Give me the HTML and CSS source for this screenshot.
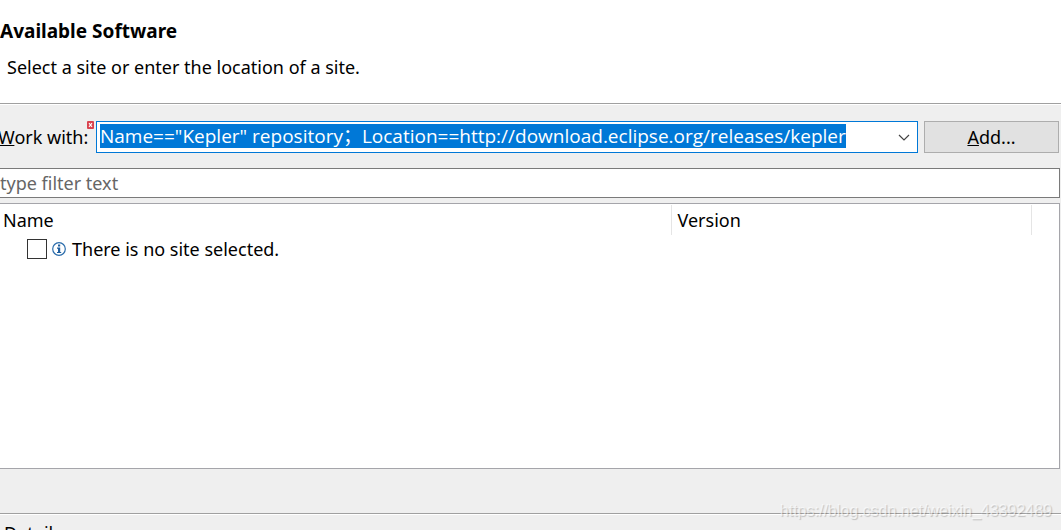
FILE: index.html
```html
<!DOCTYPE html>
<html lang="en">
<head>
<meta charset="UTF-8">
<meta name="viewport" content="width=device-width, initial-scale=1.0">
<title>Available Software</title>
<link rel="stylesheet" href="styles.css">
</head>
<body>
<header class="header">
  <h1>Available Software</h1>
  <p>Select a site or enter the location of a site.</p>
</header>

<main class="content">
  <div class="work-row">
    <label for="workWith" class="work-label"><u>W</u>ork with:</label>
    <svg class="error-icon" viewBox="0 0 7 8" aria-hidden="true">
      <rect width="7" height="8" rx="1" fill="#d9434f"/>
      <path d="M2 2.2L5 5.8M5 2.2L2 5.8" stroke="#fff" stroke-width="1.1"/>
    </svg>
    <div class="combo">
      <input type="text" id="workWith" class="combo-input" spellcheck="false" autocomplete="off" value="Name==&quot;Kepler&quot; repository；Location==http://download.eclipse.org/releases/kepler">
      <button type="button" class="combo-arrow" aria-label="Show sites">
        <svg viewBox="0 0 12 7" aria-hidden="true"><path d="M1 1L6 6L11 1" fill="none" stroke="#444" stroke-width="1.2"/></svg>
      </button>
    </div>
    <button type="button" class="add-button"><u>A</u>dd...</button>
  </div>

  <input type="text" class="filter" placeholder="type filter text" aria-label="Filter">

  <div class="table-panel">
    <table class="sites">
      <colgroup>
        <col>
        <col class="col-version">
        <col class="col-rest">
      </colgroup>
      <thead>
        <tr><th>Name</th><th>Version</th><td></td></tr>
      </thead>
      <tbody>
        <tr>
          <td colspan="3">
            <div class="site">
              <input type="checkbox" id="noSite" class="site-check">
              <svg class="info-icon" viewBox="0 0 14 14" aria-hidden="true">
                <circle cx="7" cy="7" r="6.3" fill="#fff" stroke="#2a6cab" stroke-width="1.2"/>
                <path d="M6 2.6h2.2v2H6zM5 5.6h3.2V10h1v1.1H5V10h1V6.7H5z" fill="#1f5f9f"/>
              </svg>
              <label for="noSite">There is no site selected.</label>
            </div>
          </td>
        </tr>
      </tbody>
    </table>
  </div>
</main>

<section class="details">
  <h2>Details</h2>
</section>

<div class="watermark">https://blog.csdn.net/weixin_43392489</div>

<script>
  const workWith = document.getElementById("workWith");
  workWith.focus();
  workWith.setSelectionRange(0, workWith.value.length, "backward");
</script>
</body>
</html>
```
FILE: styles.css
```css
* {
  box-sizing: border-box;
}

body {
  display: flex;
  flex-direction: column;
  height: 100vh;
  margin: 0;
  overflow: hidden;
  font-family: "Noto Sans", "Noto Sans CJK SC", sans-serif;
  font-size: 18px;
  line-height: 24px;
  color: #000;
  background-color: #efefef;
}

input,
button {
  font: inherit;
  color: inherit;
}

.header {
  height: 104px;
  padding-top: 19px;
  background-color: #fff;
  border-bottom: 1px solid #a0a0a0;
}

h1 {
  margin: 0;
  font-size: 19px;
  font-weight: bold;
}

.header p {
  margin: 12px 0 0 7px;
}

.content {
  flex: 1;
  display: flex;
  flex-direction: column;
  min-height: 0;
  padding: 16px 1px 0 0;
  border-top: 1px solid #fff;
}

.work-row {
  display: flex;
  align-items: center;
  height: 32px;
  margin-right: 1px;
}

.work-label {
  width: 87px;
  margin-left: -2px;
  white-space: nowrap;
}

.error-icon {
  align-self: flex-start;
  width: 7px;
  height: 8px;
  margin: 0 2px;
}

.combo {
  flex: 1;
  display: flex;
  align-items: center;
  height: 32px;
  background-color: #fff;
  border: 1px solid #0078d7;
}

.combo-input {
  flex: 1;
  min-width: 0;
  height: 24px;
  padding: 0;
  margin: 0 0 2px 3px;
  font-family: "Open Sans", "Noto Sans CJK SC", sans-serif;
  font-size: 19px;
  border: none;
  outline: none;
  background: none;
}

.combo-input::selection {
  color: #fff;
  background-color: #0078d7;
}

.combo-arrow {
  display: flex;
  justify-content: center;
  width: 26px;
  padding: 0;
  border: none;
  background: none;
}

.combo-arrow svg {
  width: 12px;
  height: 7px;
}

.add-button {
  width: 135px;
  height: 32px;
  margin-left: 6px;
  padding: 0;
  background-color: #e1e1e1;
  border: 1px solid #adadad;
}

.filter {
  width: 100%;
  height: 30px;
  margin-top: 15px;
  padding: 0;
  background-color: #fff;
  border: 1px solid #7a7a7a;
  border-left: none;
  border-radius: 0;
}

.filter::placeholder {
  color: #666;
}

.table-panel {
  flex: 1;
  margin-top: 5px;
  padding-top: 1px;
  background-color: #fff;
  border: 1px solid #a5a5aa;
  border-left: none;
}

.sites {
  width: 100%;
  table-layout: fixed;
  border-collapse: collapse;
}

.col-version {
  width: 360px;
}

.col-rest {
  width: 28px;
}

.sites th,
.sites td {
  padding: 0;
  text-align: left;
  font-weight: normal;
}

.sites thead tr {
  height: 30px;
}

.sites th {
  padding-left: 3px;
  border-right: 1px solid #e5e5e5;
}

.sites th + th {
  padding-left: 6px;
}

.site {
  display: flex;
  align-items: center;
  height: 27px;
  padding-left: 27px;
}

.site-check {
  appearance: none;
  width: 20px;
  height: 20px;
  margin: 0 5px 0 0;
  border: 1px solid #333;
  background-color: #fff;
}

.info-icon {
  width: 14px;
  height: 14px;
  margin-right: 6px;
}

.details {
  height: 17px;
  margin-top: 44px;
  padding: 7px 0 0 4px;
  overflow: hidden;
  border-top: 1px solid #a0a0a0;
  box-shadow: inset 0 1px #fff;
}

h2 {
  margin: 0;
  font-size: 18px;
  font-weight: normal;
}

.watermark {
  position: absolute;
  right: 9px;
  bottom: 7px;
  font-family: "Liberation Sans", Arial, sans-serif;
  font-size: 16px;
  color: rgba(255, 255, 255, 0.6);
  text-shadow: 1px 1px 1px rgba(0, 0, 0, 0.2);
}
```
